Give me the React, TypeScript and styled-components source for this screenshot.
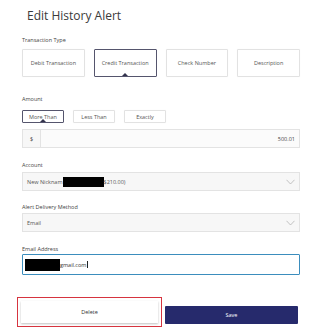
import React from "react";
import styled, { createGlobalStyle } from "styled-components";

const Global = createGlobalStyle`
  html, body { margin: 0; padding: 0; background: #ffffff; }
  body { font-family: "Open Sans", "Noto Sans", Arial, sans-serif; color: #333; }
  * { box-sizing: border-box; }
`;

const Page = styled.div`
  width: 315px;
  height: 332px;
  overflow: hidden;
  padding: 7px 15px 0 22px;
  display: flex;
  flex-direction: column;
`;

const Title = styled.h1`
  margin: 0 0 0 5px;
  font-size: 12px;
  line-height: 18px;
  font-weight: 400;
  color: #3a3a3a;
`;

const Label = styled.div<{ $top: number }>`
  margin-top: ${(p) => p.$top}px;
  font-size: 5.5px;
  line-height: 8px;
  height: 8px;
  color: #444;
`;

const ChoiceRow = styled.div<{ $top: number }>`
  margin-top: ${(p) => p.$top}px;
  display: flex;
  gap: 9px;
`;

const Choice = styled.div<{ $w: number; $h: number; $active?: boolean }>`
  position: relative;
  width: ${(p) => p.$w}px;
  height: ${(p) => p.$h}px;
  border: 1px solid ${(p) => (p.$active ? "#55556d" : "#e2e2e2")};
  border-radius: 1px;
  background: #fff;
  display: flex;
  align-items: center;
  justify-content: center;
  font-size: 5.5px;
  color: #555;
  box-shadow: ${(p) => (p.$active ? "none" : "0 0 1px rgba(0,0,0,0.06)")};
  ${(p) =>
    p.$active &&
    `&::after {
      content: "";
      position: absolute;
      left: 50%;
      bottom: 0;
      transform: translateX(-50%);
      width: 0; height: 0;
      border-left: 3px solid transparent;
      border-right: 3px solid transparent;
      border-bottom: 3px solid #33334d;
    }`}
`;

const AmountBox = styled.div`
  margin-top: 6px;
  height: 19px;
  flex: none;
  display: flex;
  border: 1px solid #e3e3e3;
  background: #fff;
`;

const Prefix = styled.div`
  width: 18px;
  border-right: 1px solid #e3e3e3;
  background: #f7f7f7;
  display: flex;
  align-items: center;
  justify-content: center;
  font-size: 5.5px;
  color: #444;
`;

const AmountValue = styled.div`
  flex: 1;
  display: flex;
  align-items: center;
  justify-content: flex-end;
  padding-right: 4px;
  font-size: 5.5px;
  color: #444;
  background: #fbfbfb;
`;

const Select = styled.div<{ $top: number }>`
  margin-top: ${(p) => p.$top}px;
  height: 19px;
  flex: none;
  border: 1px solid #e3e3e3;
  background: #f7f7f7;
  display: flex;
  align-items: center;
  padding: 0 4px 0 4px;
  font-size: 5.5px;
  color: #555;
`;

const SelectText = styled.div`
  flex: 1;
  display: flex;
  align-items: center;
`;

const Redact = styled.span<{ $w: number; $h: number }>`
  display: inline-block;
  width: ${(p) => p.$w}px;
  height: ${(p) => p.$h}px;
  background: #000;
`;

const EmailInput = styled.div`
  margin-top: 1px;
  height: 21px;
  flex: none;
  border: 1.5px solid #3b8dbd;
  border-radius: 1px;
  background: #fff;
  display: flex;
  align-items: center;
  padding-left: 2px;
  font-size: 5.5px;
  color: #333;
`;

const Caret = styled.span`
  display: inline-block;
  width: 0.6px;
  height: 7px;
  background: #222;
  margin-left: 0.5px;
`;

const Actions = styled.div`
  margin-top: 22px;
  display: flex;
  align-items: flex-end;
  margin-left: -5px;
`;

const Highlight = styled.div`
  width: 145px;
  height: 30px;
  border: 1.5px solid #d6343f;
  padding: 2.5px 3px 3px 3px;
`;

const DeleteButton = styled.div`
  height: 22px;
  background: #fff;
  box-shadow: 0 1px 2px rgba(0,0,0,0.25);
  display: flex;
  align-items: center;
  justify-content: center;
  font-size: 5.5px;
  color: #333;
`;

const SaveButton = styled.div`
  margin-left: 3px;
  margin-bottom: 3px;
  width: 133px;
  height: 18px;
  background: #262a6c;
  border-radius: 1px;
  display: flex;
  align-items: center;
  justify-content: center;
  font-size: 5.5px;
  color: #fff;
`;

const Chevron = () => (
  <svg width="9" height="6" viewBox="0 0 9 6">
    <path d="M0.5 0.8 L4.5 5 L8.5 0.8" fill="none" stroke="#b5b5b5" strokeWidth="0.8" />
  </svg>
);

export default function App() {
  return (
    <>
      <Global />
      <Page>
        <Title>Edit History Alert</Title>
        <Label $top={11}>Transaction Type</Label>
        <ChoiceRow $top={5}>
          <Choice $w={63} $h={28}>Debit Transaction</Choice>
          <Choice $w={63} $h={28} $active>Credit Transaction</Choice>
          <Choice $w={63} $h={28}>Check Number</Choice>
          <Choice $w={63} $h={28}>Description</Choice>
        </ChoiceRow>
        <Label $top={18}>Amount</Label>
        <ChoiceRow $top={7}>
          <Choice $w={42} $h={13} $active>More Than</Choice>
          <Choice $w={42} $h={13}>Less Than</Choice>
          <Choice $w={42} $h={13}>Exactly</Choice>
        </ChoiceRow>
        <AmountBox>
          <Prefix>$</Prefix>
          <AmountValue>500.01</AmountValue>
        </AmountBox>
        <Label $top={13}>Account</Label>
        <Select $top={3}>
          <SelectText>
            New Nicknam<Redact $w={41} $h={10} />$210.00)
          </SelectText>
          <Chevron />
        </Select>
        <Label $top={12}>Alert Delivery Method</Label>
        <Select $top={2}>
          <SelectText>Email</SelectText>
          <Chevron />
        </Select>
        <Label $top={13}>Email Address</Label>
        <EmailInput>
          <Redact $w={35} $h={12} />
          gmail.com
          <Caret />
        </EmailInput>
        <Actions>
          <Highlight>
            <DeleteButton>Delete</DeleteButton>
          </Highlight>
          <SaveButton>Save</SaveButton>
        </Actions>
      </Page>
    </>
  );
}
